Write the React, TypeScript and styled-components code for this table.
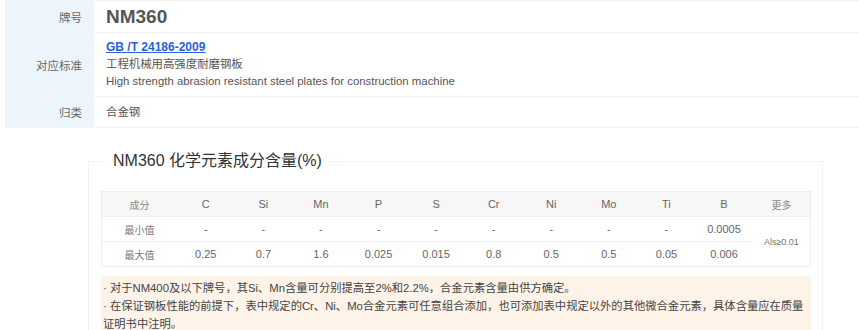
import styled, { createGlobalStyle } from "styled-components";

const GlobalStyle = createGlobalStyle`
  body {
    margin: 0;
    background: #fff;
    font-family: "Liberation Sans", "Noto Sans CJK SC", sans-serif;
    color: #555;
  }
`;

const Page = styled.div`
  padding: 0 0 0 5px;
`;

const InfoTable = styled.div`
  display: grid;
  grid-template-columns: 89px 1fr;
  border-top: 1px solid #f2f2f2;
`;

const Label = styled.div<{ h: number }>`
  background: #edf5fc;
  color: #666;
  font-size: 11.5px;
  padding-right: 12px;
  height: ${(p) => p.h}px;
  display: flex;
  align-items: center;
  justify-content: flex-end;
  border-bottom: 1px solid #f2f2f2;
`;

const Value = styled.div<{ h: number }>`
  height: ${(p) => p.h}px;
  padding-left: 12px;
  display: flex;
  flex-direction: column;
  justify-content: center;
  font-size: 11.4px;
  color: #555;
  line-height: 17px;
  border-bottom: 1px solid #f2f2f2;
`;

const Grade = styled.span`
  font-size: 19px;
  font-weight: bold;
  color: #555;
`;

const StdLink = styled.a`
  color: #2b5fdc;
  font-weight: bold;
  text-decoration: underline;
  font-size: 12px;
`;

const Section = styled.fieldset`
  margin: 24px 0 0 83px;
  width: 734px;
  box-sizing: border-box;
  border: 1px solid #f2f2f2;
  padding: 21px 11px 0 12px;
`;

const Legend = styled.legend`
  font-size: 16px;
  line-height: 18px;
  color: #333;
  padding: 0 8px;
  margin-left: 4px;
`;

const ChemTable = styled.table`
  width: 710px;
  border-collapse: collapse;
  border: 1px solid #eee;
  table-layout: fixed;
`;

const Th = styled.th<{ w?: number; muted?: boolean }>`
  background: #f7f7f7;
  font-weight: normal;
  font-size: ${(p) => (p.muted ? "10px" : "11px")};
  color: ${(p) => (p.muted ? "#888" : "#666")};
  height: 24px;
  padding: 0;
  text-align: center;
  border-bottom: 1px solid #eee;
  width: ${(p) => (p.w ? `${p.w}px` : "auto")};
`;

const Td = styled.td<{ muted?: boolean; small?: boolean }>`
  font-size: ${(p) => (p.small ? "9px" : p.muted ? "10px" : "11px")};
  color: ${(p) => (p.muted ? "#777" : "#666")};
  text-align: center;
  height: 24px;
  padding: 0;
  border-bottom: 1px solid #eee;
`;

const Note = styled.div`
  margin-top: 9px;
  background: #fdf3e9;
  padding: 3px 2px 6px 2px;
  font-size: 11.3px;
  line-height: 18px;
  color: #444;
`;

const elements = ["C", "Si", "Mn", "P", "S", "Cr", "Ni", "Mo", "Ti", "B"];
const minVals = ["-", "-", "-", "-", "-", "-", "-", "-", "-", "0.0005"];
const maxVals = ["0.25", "0.7", "1.6", "0.025", "0.015", "0.8", "0.5", "0.5", "0.05", "0.006"];

export default function App() {
  return (
    <Page>
      <GlobalStyle />
      <InfoTable>
        <Label h={31}>牌号</Label>
        <Value h={31}>
          <Grade>NM360</Grade>
        </Value>
        <Label h={63}>对应标准</Label>
        <Value h={63}>
          <StdLink href="#">GB /T 24186-2009</StdLink>
          <div>工程机械用高强度耐磨钢板</div>
          <div>High strength abrasion resistant steel plates for construction machine</div>
        </Value>
        <Label h={30}>归类</Label>
        <Value h={30}>合金钢</Value>
      </InfoTable>

      <Section>
        <Legend>NM360 化学元素成分含量(%)</Legend>
        <ChemTable>
          <thead>
            <tr>
              <Th w={75} muted>成分</Th>
              {elements.map((e) => (
                <Th key={e}>{e}</Th>
              ))}
              <Th muted>更多</Th>
            </tr>
          </thead>
          <tbody>
            <tr>
              <Td muted>最小值</Td>
              {minVals.map((v, i) => (
                <Td key={i}>{v}</Td>
              ))}
              <Td rowSpan={2} muted small>Als≥0.01</Td>
            </tr>
            <tr>
              <Td muted>最大值</Td>
              {maxVals.map((v, i) => (
                <Td key={i}>{v}</Td>
              ))}
            </tr>
          </tbody>
        </ChemTable>
        <Note>
          <div>· 对于NM400及以下牌号，其Si、Mn含量可分别提高至2%和2.2%，合金元素含量由供方确定。</div>
          <div>
            · 在保证钢板性能的前提下，表中规定的Cr、Ni、Mo合金元素可任意组合添加，也可添加表中规定以外的其他微合金元素，具体含量应在质量证明书中注明。
          </div>
        </Note>
      </Section>
    </Page>
  );
}
